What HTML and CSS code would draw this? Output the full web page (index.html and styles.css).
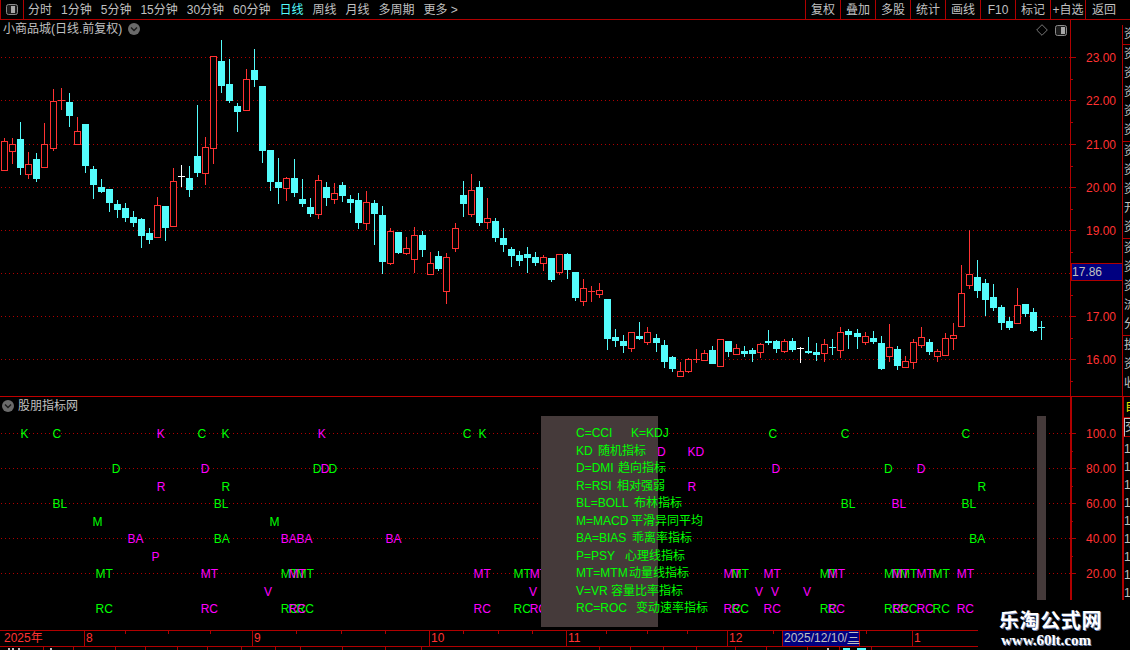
FILE: index.html
```html
<!DOCTYPE html>
<html lang="zh-CN">
<head>
<meta charset="utf-8">
<title>小商品城 K线</title>
<link rel="stylesheet" href="styles.css">
</head>
<body>
<div class="page">
  <header class="toolbar">
    <div class="side-btn">
      <svg class="side-icon" viewBox="0 0 12 11"><rect x="0.5" y="0.5" width="11" height="10" rx="2" class="ic-box"/><rect x="5" y="2" width="4" height="7" class="ic-fill"/></svg>
    </div>
    <nav class="tabs">
      <span>分时</span><span>1分钟</span><span>5分钟</span><span>15分钟</span><span>30分钟</span><span>60分钟</span><span class="on">日线</span><span>周线</span><span>月线</span><span>多周期</span><span>更多 &gt;</span>
    </nav>
    <div class="tools">
      <span>复权</span><span>叠加</span><span>多股</span><span>统计</span><span>画线</span><span>F10</span><span>标记</span><span>+自选</span><span class="last">返回</span>
    </div>
  </header>

  <section class="pane upper">
    <svg id="price" class="chart" viewBox="0 20 1070 376" width="1070" height="376" shape-rendering="crispEdges">
      <g class="dots">
        <line x1="1" x2="1070" y1="57.5" y2="57.5"/><line x1="1" x2="1070" y1="100.5" y2="100.5"/><line x1="1" x2="1070" y1="144.5" y2="144.5"/><line x1="1" x2="1070" y1="187.5" y2="187.5"/><line x1="1" x2="1070" y1="230.5" y2="230.5"/><line x1="1" x2="1070" y1="273.5" y2="273.5"/><line x1="1" x2="1070" y1="316.5" y2="316.5"/><line x1="1" x2="1070" y1="359.5" y2="359.5"/>
      </g>
    </svg>
    <div class="title">
      <span>小商品城(日线.前复权)</span>
      <svg class="chev" viewBox="0 0 12 12"><circle cx="6" cy="6" r="6" class="chev-bg"/><path d="M3 4.5 L6 7.5 L9 4.5" class="chev-line"/></svg>
    </div>
    <div class="corner">
      <svg class="diamond" viewBox="0 0 12 12"><path d="M6 .7 L11.3 6 L6 11.3 L.7 6 Z" class="dia-line"/></svg>
      <svg class="side-icon" viewBox="0 0 12 11"><rect x="0.5" y="0.5" width="11" height="10" rx="2" class="ic-box"/><rect x="6" y="2" width="4" height="7" class="ic-fill"/></svg>
    </div>
    <svg class="axis" viewBox="1070 20 52 376" width="52" height="376" shape-rendering="crispEdges">
      <path class="axis-line" d="M1070.5 20V396M1071 57.5H1076M1071 100.5H1076M1071 144.5H1076M1071 187.5H1076M1071 230.5H1076M1071 316.5H1076M1071 359.5H1076M1071 79.5H1073M1071 122.5H1073M1071 166.5H1073M1071 209.5H1073M1071 252.5H1073M1071 295.5H1073M1071 338.5H1073M1071 381.5H1073"/>
      <g class="axis-text">
        <text x="1116" y="62">23.00</text><text x="1116" y="105">22.00</text><text x="1116" y="149">21.00</text><text x="1116" y="192">20.00</text><text x="1116" y="235">19.00</text><text x="1116" y="321">17.00</text><text x="1116" y="364">16.00</text>
      </g>
      <rect class="cur-bg" x="1071" y="263" width="51" height="17"/>
      <text class="cur-text" x="1072" y="276">17.86</text>
    </svg>
    <aside class="strip">
      <div class="cell c1"><span>资</span></div>
      <div class="cell c5"><span>资资资资资</span></div>
      <div class="cell c5"><span>资资资开资</span></div>
      <div class="cell c5"><span>资资资流分</span></div>
      <div class="cell c3"><span>投资收</span></div>
    </aside>
  </section>

  <section class="pane lower">
    <svg id="marks" class="chart" viewBox="0 397 1070 233" width="1070" height="233" shape-rendering="crispEdges">
      <g class="dots">
        <line x1="1" x2="1070" y1="433.5" y2="433.5"/><line x1="1" x2="1070" y1="468.5" y2="468.5"/><line x1="1" x2="1070" y1="503.5" y2="503.5"/><line x1="1" x2="1070" y1="538.5" y2="538.5"/><line x1="1" x2="1070" y1="573.5" y2="573.5"/>
      </g>
      <rect class="band" x="1037" y="416" width="9" height="211"/>
    </svg>
    <div class="pane-head">
      <svg class="chev" viewBox="0 0 12 12"><circle cx="6" cy="6" r="6" class="chev-bg"/><path d="M3 4.5 L6 7.5 L9 4.5" class="chev-line"/></svg>
      <span>股朋指标网</span>
    </div>
    <div class="legend">
      <div><span class="k">C=CCI</span><span>K=KDJ</span></div>
      <div><span class="k">KD</span><span>随机指标</span></div>
      <div><span class="k">D=DMI</span><span>趋向指标</span></div>
      <div><span class="k">R=RSI</span><span>相对强弱</span></div>
      <div><span class="k">BL=BOLL</span><span>布林指标</span></div>
      <div><span class="k">M=MACD</span><span>平滑异同平均</span></div>
      <div><span class="k">BA=BIAS</span><span>乖离率指标</span></div>
      <div><span class="k">P=PSY</span><span>心理线指标</span></div>
      <div><span class="k">MT=MTM</span><span>动量线指标</span></div>
      <div><span class="k">V=VR</span><span>容量比率指标</span></div>
      <div><span class="k">RC=ROC</span><span>变动速率指标</span></div>
    </div>
    <svg class="axis" viewBox="1070 397 52 233" width="52" height="233" shape-rendering="crispEdges">
      <path class="axis-thick" d="M1071 397V630"/>
      <path class="axis-line" d="M1071 433.5H1076M1071 468.5H1076M1071 503.5H1076M1071 538.5H1076M1071 573.5H1076M1071 451.5H1073M1071 486.5H1073M1071 521.5H1073M1071 556.5H1073"/>
      <g class="axis-text">
        <text x="1116" y="438">100.0</text><text x="1116" y="473">80.00</text><text x="1116" y="508">60.00</text><text x="1116" y="543">40.00</text><text x="1116" y="578">20.00</text>
      </g>
    </svg>
    <aside class="strip strip-low">
      <div class="cell-y"><span>自</span></div>
      <div class="cell-w"><span>交</span></div>
      <div class="ones">1 1 1 1 1 1 1 1 1</div>
    </aside>
  </section>

  <footer class="timebar">
    <div class="seg s-year">2025年</div>
    <div class="seg s-8">8</div>
    <div class="seg s-9">9</div>
    <div class="seg s-10">10</div>
    <div class="seg s-11">11</div>
    <div class="seg s-12">12</div>
    <div class="seg s-date">2025/12/10/<u>三</u></div>
    <div class="seg s-gap"></div>
    <div class="seg s-1">1</div>
    <svg class="ticks" viewBox="0 0 1130 3" width="1130" height="3" shape-rendering="crispEdges">
      <path class="axis-line" d="M125.5 0V3M168.5 0V3M210.5 0V3M296.5 0V3M341.5 0V3M385.5 0V3M463.5 0V3M498.5 0V3M532.5 0V3M606.5 0V3M647.5 0V3M687.5 0V3M773.5 0V3M866.5 0V3"/>
    </svg>
  </footer>
  <div class="tail">
    <svg viewBox="0 0 1130 3" width="1130" height="3" shape-rendering="crispEdges">
      <path class="axis-line" d="M43.5 0V3M73.5 0V3M115.5 0V3M145.5 0V3M177.5 0V3M207.5 0V3M241.5 0V3M275.5 0V3M300.5 0V3M342.5 0V3M385.5 0V3M421.5 0V3M599.5 0V3M630.5 0V3M663.5 0V3M696.5 0V3M735.5 0V3M766.5 0V3M807.5 0V3M839.5 0V3M871.5 0V3"/>
      <path class="frag" d="M8 1H10V3H8ZM12 1H14V3H12ZM18 1H20V3H18ZM50 1H52V3H50ZM827 1H829V3H827Z"/>
      <path class="frag-c" d="M843 1H850V3H843ZM857 1H866V3H857Z"/>
    </svg>
  </div>

  <div class="logo">
    <div class="logo-cn">乐淘公式网</div>
    <div class="logo-en">www.60lt.com</div>
  </div>
</div>
<script src="script.js"></script>
</body>
</html>
```

FILE: styles.css
```css
* { box-sizing: border-box; }
html, body { margin: 0; padding: 0; background: #000; }
body {
  font: 12px/1 "Liberation Sans", "Noto Sans CJK SC", sans-serif;
  color: #c0c0c0;
  overflow: hidden;
}
.page { position: relative; width: 1130px; height: 650px; overflow: hidden; background: #000; }

/* toolbar */
.toolbar { display: flex; align-items: stretch; height: 20px; border-bottom: 1px solid #b00000; }
.side-btn { width: 24px; display: flex; align-items: center; justify-content: center; border: 1px solid #b00000; border-width: 0 1px 0 1px; }
.side-icon { width: 12px; height: 11px; display: block; }
.ic-box { fill: #1c1c1c; stroke: #8a8a8a; }
.ic-fill { fill: #a8a8a8; }
.tabs { display: flex; align-items: center; gap: 9px; padding-left: 4px; }
.tabs .on { color: #54fcfc; }
.tools { margin-left: auto; display: flex; padding-right: 10px; }
.tools span { width: 35px; display: flex; align-items: center; justify-content: center; border-left: 1px solid #b00000; white-space: nowrap; }
.tools .last { padding-left: 2px; }

/* panes */
.pane { position: relative; display: flex; }
.upper { height: 377px; border-bottom: 1px solid #c00000; }
.lower { height: 233px; }
.chart, .axis { display: block; flex: none; }

.dots line { stroke: #b00000; stroke-width: 1; stroke-dasharray: 1 3; }
.title { position: absolute; left: 3px; top: 0; height: 18px; display: flex; align-items: center; gap: 6px; white-space: nowrap; }
.chev { width: 12px; height: 12px; flex: none; }
.chev-bg { fill: #6a6a6a; }
.chev-line { fill: none; stroke: #1a1a1a; stroke-width: 1.4; }
.corner { position: absolute; left: 1036px; top: 4px; display: flex; align-items: center; gap: 7px; }
.diamond { width: 12px; height: 12px; }
.dia-line { fill: none; stroke: #777; }

.axis-line { fill: none; stroke: #b00000; stroke-width: 1; }
.axis-thick { fill: none; stroke: #b00000; stroke-width: 2; }
.axis-text text { fill: #ff3232; text-anchor: end; font: 12px "Liberation Sans", sans-serif; }
.cur-bg { fill: #000080; stroke: #b00000; stroke-width: 1; }
.cur-text { fill: #c0c0c0; font: 12px "Liberation Sans", sans-serif; }

/* right clipped strip */
.strip { width: 8px; flex: none; margin-top: 5px; border-left: 1px solid #b00000; overflow: hidden; }
.cell { border-bottom: 1px solid #b00000; overflow: hidden; line-height: 19px; padding-left: 1px; }
.cell span { display: block; width: 12px; word-break: break-all; }
.c1 { height: 20px; }
.c5 { height: 97px; }
.c3 { height: 60px; border-bottom: 0; }
.strip-low { margin-top: 0; border-left-width: 2px; }
.cell-y { height: 21px; color: #e8e800; line-height: 21px; overflow: hidden; padding-left: 1px; border-bottom: 1px solid #b00000; }
.cell-y span, .cell-w span { display: block; width: 12px; }
.cell-w { height: 19px; line-height: 17px; overflow: hidden; border: 1px solid #c0c0c0; border-right: 0; border-bottom-color: #b00000; }
.ones { width: 7px; padding-top: 3px; line-height: 18px; color: #c0c0c0; font-size: 12px; }

/* lower pane */
.pane-head { position: absolute; left: 2px; top: 2px; height: 13px; display: flex; align-items: center; gap: 4px; white-space: nowrap; }
.band { fill: #453a3a; }
.mk { font: 12px "Liberation Sans", sans-serif; }
.g { fill: #00ff00; }
.m { fill: #ff00ff; }
.legend {
  position: absolute; left: 541px; top: 19px; width: 117px; height: 211px;
  padding: 9px 0 0 35px; background: #453a3a; color: #00ff00; white-space: nowrap;
}
.legend div { height: 17.5px; line-height: 17px; display: flex; }
.legend .k { flex: none; }
.legend div:nth-child(1) .k { width: 55px; }
.legend div:nth-child(2) .k { width: 22px; }
.legend div:nth-child(3) .k { width: 42px; }
.legend div:nth-child(4) .k { width: 41px; }
.legend div:nth-child(5) .k { width: 58px; }
.legend div:nth-child(6) .k { width: 55px; }
.legend div:nth-child(7) .k { width: 56px; }
.legend div:nth-child(8) .k { width: 49px; }
.legend div:nth-child(9) .k { width: 53px; }
.legend div:nth-child(10) .k { width: 35px; }
.legend div:nth-child(11) .k { width: 60px; }

/* time bar */
.timebar { position: relative; display: flex; height: 17px; border-top: 1px solid #b00000; border-bottom: 1px solid #b00000; color: #ff3232; }
.seg { flex: none; height: 15px; line-height: 15px; padding-left: 1px; border-left: 1px solid #b00000; white-space: nowrap; }
.s-year { width: 84px; padding-left: 4px; border-left: 0; }
.s-8 { width: 168px; }
.s-9 { width: 177px; }
.s-10 { width: 137px; }
.s-11 { width: 161px; }
.s-12 { width: 55px; }
.s-date { width: 78px; background: #000080; color: #c0c0c0; border-right: 1px solid #b00000; }
.s-gap { width: 52px; border-left: 0; }
.s-1 { width: 218px; }
.ticks { position: absolute; left: 0; top: 0; }
.tail { height: 3px; overflow: hidden; }
.tail svg { display: block; }
.frag { fill: #c0c0c0; }
.frag-c { fill: #54fcfc; }

/* watermark */
.logo { position: absolute; left: 978px; top: 600px; width: 152px; height: 50px; background: #000; color: #fff; display: flex; flex-direction: column; }
.logo-cn { margin: 9px 0 0 21px; font: 700 20px/22px "Noto Sans CJK SC", sans-serif; letter-spacing: .6px; text-shadow: 1px 1px 0 #6a7fb0; white-space: nowrap; }
.logo-en { margin: 2px 0 0 23px; font: 700 15px/15px "Liberation Serif", serif; text-shadow: 1px 1px 0 #6a7fb0; white-space: nowrap; }
```

FILE: script.js
```js
// type, high, body top, body bottom, low
var K = [
["r",138,141,170,170],["r",138,144,151,163],["c",122,139,167,174],["r",152,164,174,178],["c",153,159,178,181],
["r",123,144,167,167],["r",89,101,148,150],["r",88,100,100,109],["c",93,102,115,126],["r",117,131,144,144],
["c",124,124,165,172],["c",166,169,184,198],["c",179,187,191,192],["c",189,189,202,211],["c",200,204,209,217],
["c",203,208,217,221],["c",211,217,222,226],["c",218,219,235,247],["c",228,233,239,243],["r",197,205,237,237],
["c",206,206,227,240],["r",168,181,226,226],["w",165,176,176,186],["c",166,178,189,196],["c",105,156,172,176],
["r",137,147,173,184],["r",56,56,148,163],["c",40,61,85,92],["c",59,84,100,102],["c",103,106,111,131],
["r",69,79,110,110],["c",49,70,79,86],["c",86,86,150,162],["c",150,150,181,190],["c",158,182,187,203],
["r",177,178,188,200],["c",159,178,192,196],["c",179,199,203,206],["c",198,207,213,216],["r",175,180,214,218],
["c",182,187,197,205],["r",183,193,199,203],["c",182,185,195,201],["c",195,199,202,212],["c",193,200,222,228],
["r",191,202,223,229],["c",200,203,213,244],["c",206,215,261,273],["r",228,231,263,264],["c",232,232,252,253],
["r",237,248,253,254],["r",227,235,259,272],["c",231,235,249,256],["r",252,263,274,274],["c",251,256,268,270],
["r",253,257,291,303],["r",223,228,248,251],["c",181,195,203,216],["r",174,190,214,216],["c",181,187,222,225],
["r",198,218,222,228],["c",218,221,237,241],["c",228,238,244,251],["c",247,249,255,266],["c",251,255,260,265],
["c",247,254,257,272],["c",252,257,262,265],["r",255,257,263,270],["c",258,258,279,281],["r",254,254,272,274],
["c",253,254,269,278],["c",272,272,297,300],["r",279,288,301,305],["r",286,291,291,301],["r",283,290,294,297],
["c",299,299,338,349],["c",329,337,340,346],["c",335,341,345,352],["r",332,332,348,351],["c",322,336,338,339],
["r",327,332,342,344],["c",334,338,342,351],["c",340,345,361,367],["c",356,357,368,371],["r",362,371,376,376],
["r",358,359,371,372],["r",349,359,359,362],["r",350,353,360,360],["c",346,350,363,363],["r",339,339,366,366],
["c",341,341,351,356],["r",344,348,354,354],["c",346,351,353,356],["c",348,350,353,361],["r",343,344,352,357],
["c",330,341,342,344],["c",340,341,348,352],["r",339,341,351,352],["c",338,341,349,351],["w",347,348,348,362],
["c",337,351,352,353],["c",343,352,354,360],["r",339,344,353,361],["c",339,347,347,354],["r",327,332,350,357],
["c",329,331,334,348],["c",329,333,336,348],["r",332,336,342,344],["c",331,338,341,343],["c",336,343,368,369],
["r",324,347,356,361],["c",346,349,365,369],["r",356,361,367,367],["r",339,342,362,368],["r",327,337,345,347],
["c",339,342,351,354],["r",349,351,356,361],["r",333,338,355,355],["r",323,335,338,349],["r",265,293,326,326],
["r",230,274,285,288],["c",260,277,290,297],["c",279,283,299,315],["c",284,297,307,310],["c",305,307,322,329],
["c",317,321,327,329],["r",288,305,323,323],["c",304,304,313,316],["c",308,312,330,331],["c",321,327,327,339]
];

// row centre y, text, colour, x list
var M = [
[433,"K","g",[20.5,221.6,478.6]],[433,"K","m",[156.8,317.8]],[433,"C","g",[52.6,197.5,462.7,768.6,840.7,961.4]],
[451,"D","m",[657]],[451,"KD","m",[687.5]],
[468,"D","g",[111.7,312.8,328.6,884]],[468,"D","m",[200.7,320.7,771.5,916.7]],
[486,"R","m",[156.8,687.5]],[486,"R","g",[221.6,977.6]],
[503,"BL","g",[52.6,213.7,840.7,961.4]],[503,"BL","m",[891.5]],
[521,"M","g",[92.6,269.5]],
[538,"BA","m",[127.6,280.7,296.6,385.6]],[538,"BA","g",[213.7,969.3]],
[556,"P","m",[151.4]],
[573,"MT","g",[95.5,280.7,296.6,513.5,731.5,819.8,884,900,932.6]],
[573,"MT","m",[200.7,288.6,473.5,529.7,723.6,763.6,827.7,891.9,916.4,956.7]],
[591,"V","m",[264,529,755,771,803]],
[608,"RC","g",[95.5,280.7,296.6,513.5,731.5,819.8,884,900,932.6]],
[608,"RC","m",[200.7,288.6,473.5,529.7,723.6,763.6,827.7,891.9,916.4,956.7]]
];

var NS = "http://www.w3.org/2000/svg";
function el(parent, name, attrs) {
  var n = document.createElementNS(NS, name);
  for (var a in attrs) n.setAttribute(a, attrs[a]);
  parent.appendChild(n);
  return n;
}
var COL = { r: "#ff3232", c: "#54fcfc", w: "#ffffff" };
var price = document.getElementById("price");
K.forEach(function (k, i) {
  var x = Math.round(4.3 + i * 8.04), c = COL[k[0]];
  el(price, "rect", { x: x, y: k[1], width: 1, height: k[4] - k[1] + 1, fill: c });
  if (k[2] === k[3]) {
    el(price, "rect", { x: x - 3, y: k[2], width: 7, height: 1, fill: c });
  } else if (k[0] === "r") {
    el(price, "rect", { x: x - 3, y: k[2], width: 7, height: k[3] - k[2] + 1, fill: "#000" });
    el(price, "rect", { x: x - 2.5, y: k[2] + 0.5, width: 6, height: k[3] - k[2], fill: "none", stroke: c });
  } else {
    el(price, "rect", { x: x - 3, y: k[2], width: 7, height: k[3] - k[2] + 1, fill: c });
  }
});
var marks = document.getElementById("marks");
M.forEach(function (r) {
  r[3].forEach(function (x) {
    var t = el(marks, "text", { x: x, y: r[0] + 4.5, "class": "mk " + r[2] });
    t.textContent = r[1];
  });
});
```
